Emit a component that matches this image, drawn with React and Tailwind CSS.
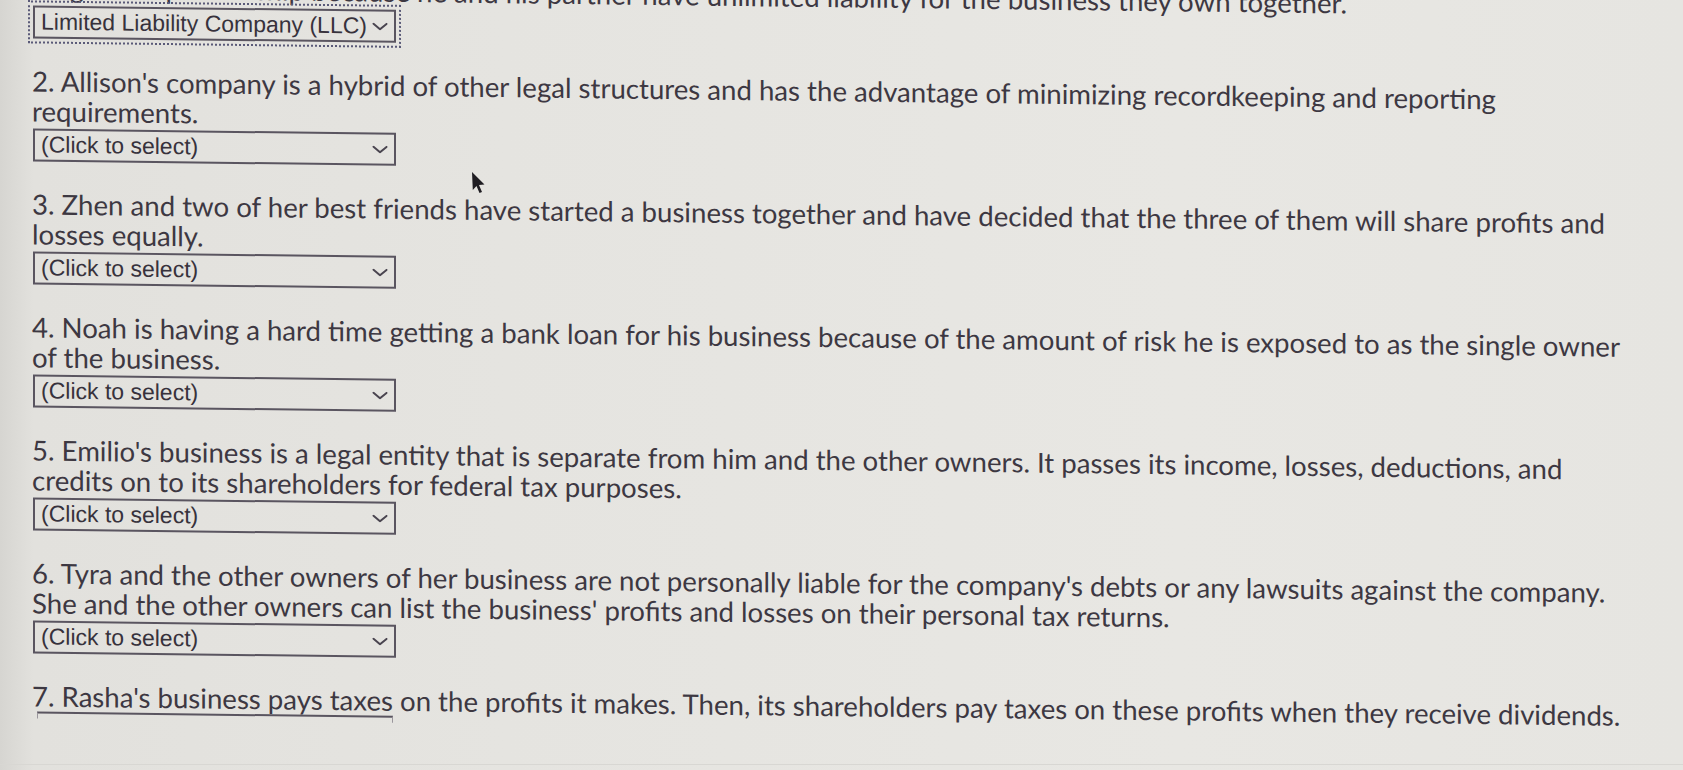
import React from "react";

const questions = [
  [
    "2. Allison's company is a hybrid of other legal structures and has the advantage of minimizing recordkeeping and reporting",
    "requirements.",
  ],
  [
    "3. Zhen and two of her best friends have started a business together and have decided that the three of them will share profits and",
    "losses equally.",
  ],
  [
    "4. Noah is having a hard time getting a bank loan for his business because of the amount of risk he is exposed to as the single owner",
    "of the business.",
  ],
  [
    "5. Emilio's business is a legal entity that is separate from him and the other owners. It passes its income, losses, deductions, and",
    "credits on to its shareholders for federal tax purposes.",
  ],
  [
    "6. Tyra and the other owners of her business are not personally liable for the company's debts or any lawsuits against the company.",
    "She and the other owners can list the business' profits and losses on their personal tax returns.",
  ],
];

function Chevron() {
  return (
    <svg width="16" height="8" viewBox="0 0 16 8" className="shrink-0">
      <path d="M1.5 1.2 L8 6.6 L14.5 1.2" fill="none" stroke="#4a4550" strokeWidth="2" strokeLinecap="round" strokeLinejoin="round" />
    </svg>
  );
}

function Select({ label, focused }) {
  return (
    <div
      className={
        "ml-[1px] w-[363px] h-[33px] border-2 border-[#5a5560] flex items-center justify-between pl-[6px] pr-[6px] " +
        (focused ? "outline-2 outline-dotted outline-offset-[3px] outline-[#5a5a78]" : "")
      }
    >
      <span className="font-['Liberation_Sans',Arial,sans-serif] text-[23px] leading-none text-[#37323c] whitespace-nowrap">
        {label}
      </span>
      <Chevron />
    </div>
  );
}

function Line({ children }) {
  return <div className="h-[30px] leading-[30px] whitespace-nowrap">{children}</div>;
}

export default function App() {
  return (
    <div className="relative w-[1683px] h-[770px] overflow-hidden bg-[linear-gradient(90deg,#d6d5d1_0%,#e2e1dd_2%,#e5e4e0_30%,#e8e7e3_70%,#e6e5e1_100%)]">
      <div className="origin-top-left skew-y-[0.7deg] pl-[32px] font-['Lato',sans-serif] text-[27.6px] text-[#3d3842]">
        <div className="mt-[-28px] w-[1315px] h-[30px] leading-[30px] flex justify-end whitespace-nowrap">
          <span>1. Juan's business is a general partnership because he and his partner have unlimited liability for the business they own together.</span>
        </div>
        <div className="mt-[3px]">
          <Select label="Limited Liability Company (LLC)" focused />
        </div>
        <div className="mt-[28px] flex flex-col gap-[28px]">
          {questions.map((q, i) => (
            <div key={i}>
              <Line>{q[0]}</Line>
              <Line>{q[1]}</Line>
              <div className="mt-[2px]">
                <Select label="(Click to select)" />
              </div>
            </div>
          ))}
          <div>
            <Line>7. Rasha's business pays taxes on the profits it makes. Then, its shareholders pay taxes on these profits when they receive dividends.</Line>
            <div className="ml-[5px] w-[356px] h-[7px] border-t-2 border-x border-[#5a5560] border-x-[#9a969c]" />
          </div>
        </div>
      </div>
      <div className="absolute left-0 right-0 top-[764px] h-px bg-[#d8d7d3]" />
      <svg className="absolute left-[471px] top-[171px]" width="14" height="24" viewBox="0 0 14 24">
        <path d="M1 1 L1.8 19 L5.5 15 L8.5 22 L11 21 L8 14 L13.5 13.5 Z" fill="#1f1d22" />
      </svg>
    </div>
  );
}
